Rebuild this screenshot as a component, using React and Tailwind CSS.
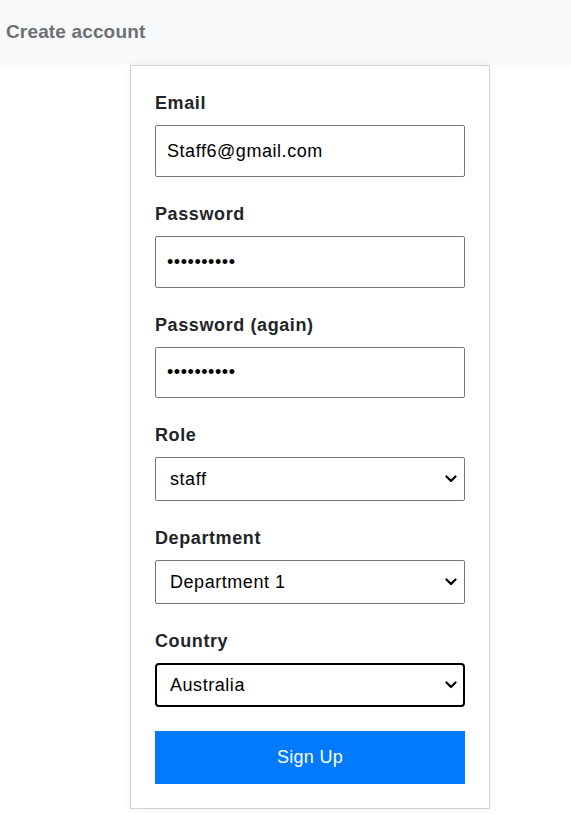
import React from "react";

const font = { fontFamily: '"Liberation Sans", Arial, sans-serif' };

function Chevron() {
  return (
    <svg
      className="pointer-events-none absolute right-[8px] top-1/2 -translate-y-1/2"
      width="12"
      height="8"
      viewBox="0 0 12 8"
    >
      <path d="M1.5 1.5 L6 6 L10.5 1.5" fill="none" stroke="#000" strokeWidth="2.2" strokeLinecap="round" strokeLinejoin="round" />
    </svg>
  );
}

function Field({ label, children }) {
  return (
    <div className="mb-[24px]">
      <label className="block text-[18px] leading-[26px] font-bold tracking-[0.6px] text-[#212529] mb-[9px]">{label}</label>
      {children}
    </div>
  );
}

function TextInput({ value, type = "text", h = "h-[52px]" }) {
  return (
    <input
      type={type}
      readOnly
      value={value}
      className={"block w-[310px] border border-[#767676] rounded-[2px] px-[11px] text-[18px] tracking-[0.55px] text-black bg-white outline-none " + h}
      style={font}
    />
  );
}

function Select({ value, focused }) {
  return (
    <div className="relative w-[310px]">
      <select
        defaultValue={value}
        className={
          "block w-[310px] h-[44px] appearance-none bg-white text-[18px] tracking-[0.55px] text-black outline-none " +
          (focused ? "border-2 border-black rounded-[4px] pl-[13px]" : "border border-[#767676] rounded-[2px] pl-[14px]")
        }
        style={font}
      >
        <option value={value}>{value}</option>
      </select>
      <Chevron />
    </div>
  );
}

export default function App() {
  return (
    <div className="min-h-[814px] bg-white" style={font}>
      <div className="h-[65px] bg-[#f8f9fa] flex items-center pl-[6px]">
        <span className="text-[19px] font-bold text-[#6c6f73] tracking-[0.15px]">Create account</span>
      </div>
      <div className="w-[360px] ml-[130px] border border-[#d3d3d3] bg-white px-[24px] pt-[24px] pb-[24px] shadow-[0_0_8px_rgba(0,0,0,0.06)]">
        <Field label="Email">
          <TextInput value="Staff6@gmail.com" />
        </Field>
        <Field label="Password">
          <TextInput type="password" value="staff12345" />
        </Field>
        <Field label="Password (again)">
          <TextInput type="password" value="staff12345" h="h-[51px]" />
        </Field>
        <Field label="Role">
          <Select value="staff" />
        </Field>
        <Field label="Department">
          <Select value="Department 1" />
        </Field>
        <Field label="Country">
          <Select value="Australia" focused />
        </Field>
        <button className="block w-[310px] h-[53px] bg-[#007bff] text-white text-[18px] tracking-[0.3px]" style={font}>
          Sign Up
        </button>
      </div>
    </div>
  );
}
